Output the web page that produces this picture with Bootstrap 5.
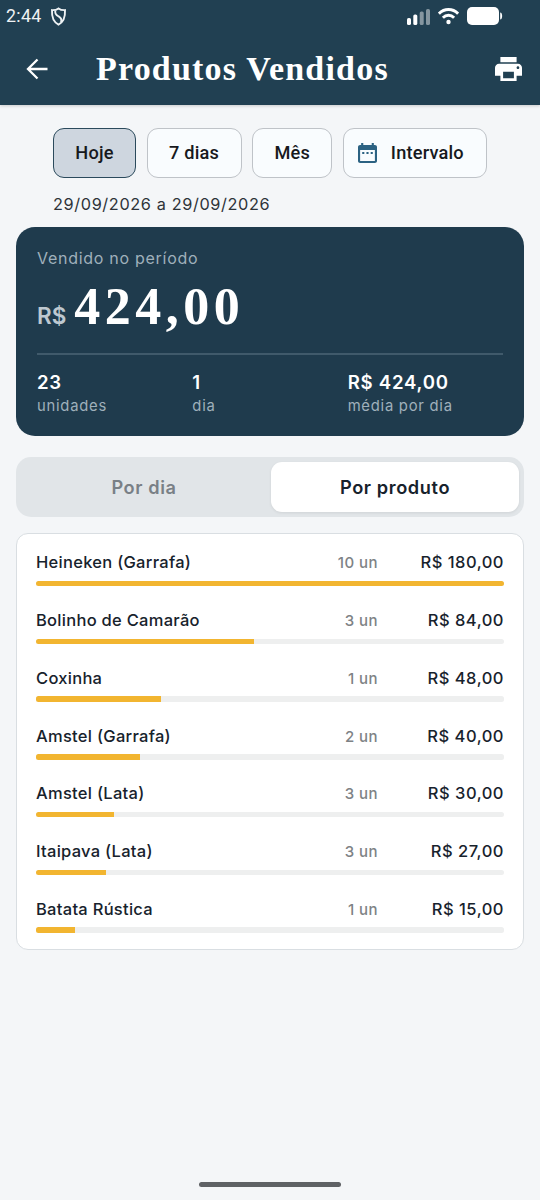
<!DOCTYPE html>
<html lang="pt-BR">
<head>
<meta charset="utf-8">
<meta name="viewport" content="width=device-width, initial-scale=1">
<title>Produtos Vendidos</title>
<link href="https://cdn.jsdelivr.net/npm/bootstrap@5.3.0/dist/css/bootstrap.min.css" rel="stylesheet">
<style>
  body { background: #f4f6f8; color: #17222c; font-family: Inter, "Open Sans", sans-serif; line-height: 1; min-height: 1200px; }
  svg { display: block; flex: none; }
  .txt { white-space: nowrap; line-height: 24px; }
  .top-area { background: #214052; height: 105px; color: #fff; box-shadow: 0 1px 3px rgba(0,0,0,.18); }
  .status-row { height: 32px; padding: 0 37px 0 6px; font-family: Roboto, sans-serif; }
  .clock { font-size: 17.8px; letter-spacing: .3px; color: #eef2f4; }
  .title-row { height: 73px; padding: 0 18px 0 25px; }
  .page-title { font: 700 34px/40px "Liberation Serif", serif; margin: 0 0 0 47px; letter-spacing: 1.2px; }
  .filters { padding: 22.6px 53px 0; }
  .chips { gap: 10.6px; }
  .chip { height: 50px; border: 1px solid #bfc3c8; border-radius: 11px; background: #f9fcfe; font: 500 18.2px/24px Roboto, sans-serif; letter-spacing: .2px; color: #17191d; padding: 0; }
  .chip.active { background: #ced6df; border-color: #2b4a5c; }
  .range { font-size: 16.3px; letter-spacing: .62px; margin-top: 14.4px; height: 24px; color: #2e3338; }
  .summary { margin: 11px 16px 0; padding: 19px 21px 0; height: 209px; border-radius: 19px; background: #1f3b4d; color: #fff; }
  .soft { color: #9fb0bb; }
  .caption-top { font-size: 16px; letter-spacing: .72px; }
  .amount-row { height: 83px; padding-top: 12px; }
  .currency { font-size: 22.5px; font-weight: 600; color: #bdc8d0; }
  .amount { font: 700 52px/50px "Liberation Serif", serif; letter-spacing: 4.5px; margin-left: 8px; }
  .rule-line { height: 2px; background: #405a6b; }
  .stat-row { padding-top: 15.5px; }
  .stat { width: 155.4px; }
  .stat-num { font-weight: 600; font-size: 18.6px; letter-spacing: .75px; }
  .stat-cap { font-size: 14.8px; letter-spacing: .75px; }
  .switcher { margin: 21px 16px 0; height: 60px; border-radius: 15px; background: #e1e5e8; padding: 5px; font-size: 18.2px; font-weight: 600; letter-spacing: .6px; }
  .switch-item { border-radius: 11px; color: #798086; }
  .switch-item.active { background: #fff; color: #17222c; box-shadow: 0 1px 3px rgba(0,0,0,.08); flex: 0 0 248px; }
  .product-list { margin: 16px 16px 0; height: 417px; border: 1px solid #d9dee2; border-radius: 12px; background: #fff; padding: 16.400px 19px 0; }
  .product { height: 57.75px; }
  .p-name, .p-total { font-size: 16.5px; font-weight: 500; }
  .p-name { letter-spacing: .28px; }
  .p-qty { font-size: 15px; font-weight: 500; color: #7e8285; width: 90px; letter-spacing: .45px; padding-top: 1px; }
  .p-total { width: 126px; letter-spacing: .5px; }
  .product-line { height: 24px; }
  .product .progress { --bs-progress-height: 5.5px; --bs-progress-bg: #eeefef; --bs-progress-bar-bg: #f2b530; --bs-progress-border-radius: 2.5px; margin-top: 6.5px; }
  .home-bar { width: 142px; height: 5px; border-radius: 3px; background: #5f6265; bottom: 13.5px; left: 199px; }
</style>
</head>
<body class="position-relative">
<header class="top-area">
  <div class="status-row d-flex align-items-center">
    <span class="clock txt">2:44</span>
    <svg style="margin-left:8px" width="17" height="19" viewBox="0 0 17 19" fill="none" stroke="#eef2f4" stroke-width="1.9"><path d="M8.500 1.400C6.500 2.900 4.400 3.200 2 3.100c-.4 7.400 1 11.700 6.500 14.500 5.500-2.800 6.900-7.100 6.500-14.500-2.400.1-4.500-.2-6.500-1.700Z"/><path d="M5.200 3.500C5 7.500 6.500 8.200 8.600 9.400c2.600 1.500 3.400 3.300 2.400 6"/></svg>
    <div class="ms-auto d-flex align-items-center">
      <svg width="24" height="17" viewBox="0 0 24 17" fill="#fff"><rect y="10" width="4" height="7" rx="1.600"/><rect x="6.300" y="6.500" width="4" height="10.500" rx="1.600"/><g opacity=".45"><rect x="12.700" y="3.500" width="4" height="13.500" rx="1.600"/><rect x="19" y="1" width="4" height="16" rx="1.600"/></g></svg>
      <svg style="margin-left:7px" width="21" height="18" viewBox="0 0 21 18" fill="none" stroke="#fff" stroke-width="2.900"><path d="M.9 6.600c5.500-5.500 13.700-5.500 19.200 0M4.900 10.700c3.200-3.200 8-3.200 11.200 0"/><circle cx="10.500" cy="15" r="2.200" fill="#fff" stroke="none"/></svg>
      <svg style="margin-left:8px" width="36" height="18" viewBox="0 0 36 18" fill="#fff"><rect width="32" height="18" rx="5"/><path d="M33.200 5.500c2.600 0 2.600 7 0 7Z"/></svg>
    </div>
  </div>
  <div class="title-row d-flex align-items-center">
    <svg width="24" height="22" viewBox="0 0 24 22" fill="none" stroke="#fff" stroke-width="2.300"><path d="M22.500 11H3M12.500 1.500 3 11l9.500 9.500"/></svg>
    <h1 class="page-title txt">Produtos Vendidos</h1>
    <svg class="ms-auto" width="27" height="24" viewBox="2 3 20 18" preserveAspectRatio="none" fill="#fff"><path d="M19 8H5c-1.660 0-3 1.340-3 3v6h4v4h12v-4h4v-6c0-1.660-1.340-3-3-3zm-3 11H8v-5h8v5zm3-7c-.55 0-1-.45-1-1s.45-1 1-1 1 .45 1 1-.45 1-1 1zm-1-9H6v4h12V3z"/></svg>
  </div>
</header>
<main>
  <section class="filters">
    <div class="chips d-flex">
      <button class="chip active" style="width:83px"><span class="txt">Hoje</span></button>
      <button class="chip" style="width:95px"><span class="txt">7 dias</span></button>
      <button class="chip" style="width:80px"><span class="txt">Mês</span></button>
      <button class="chip d-flex align-items-center" style="width:144px;padding-left:14px"><svg width="19" height="20" viewBox="3 2 18 20" preserveAspectRatio="none" fill="#2c6282"><path d="M9 11H7v2h2v-2zm4 0h-2v2h2v-2zm4 0h-2v2h2v-2zm2-7h-1V2h-2v2H8V2H6v2H5c-1.110 0-1.990.9-1.990 2L3 20c0 1.100.89 2 2 2h14c1.100 0 2-.9 2-2V6c0-1.100-.9-2-2-2zm0 16H5V9h14v11z"/></svg><span class="txt" style="margin-left:14px">Intervalo</span></button>
    </div>
    <div class="range"><span class="txt">29/09/2026 a 29/09/2026</span></div>
  </section>
  <section class="summary">
    <div class="soft caption-top"><span class="txt">Vendido no período</span></div>
    <div class="amount-row d-flex align-items-baseline"><span class="txt currency">R$</span><span class="amount">424,00</span></div>
    <div class="rule-line"></div>
    <div class="stat-row d-flex">
      <div class="stat"><div><span class="txt stat-num">23</span></div><div><span class="txt stat-cap soft">unidades</span></div></div>
      <div class="stat"><div><span class="txt stat-num">1</span></div><div><span class="txt stat-cap soft">dia</span></div></div>
      <div class="stat"><div><span class="txt stat-num">R$ 424,00</span></div><div><span class="txt stat-cap soft">média por dia</span></div></div>
    </div>
  </section>
  <nav class="switcher d-flex">
    <div class="switch-item flex-fill d-flex align-items-center justify-content-center"><span class="txt me-1">Por dia</span></div>
    <div class="switch-item active d-flex align-items-center justify-content-center"><span class="txt">Por produto</span></div>
  </nav>
  <section class="product-list">
    <div class="product"><div class="product-line d-flex"><span class="txt p-name me-auto">Heineken (Garrafa)</span><span class="txt p-qty text-end">10 un</span><span class="txt p-total text-end">R$ 180,00</span></div><div class="progress"><div class="progress-bar" style="width:100%"></div></div></div>
    <div class="product"><div class="product-line d-flex"><span class="txt p-name me-auto">Bolinho de Camarão</span><span class="txt p-qty text-end">3 un</span><span class="txt p-total text-end">R$ 84,00</span></div><div class="progress"><div class="progress-bar" style="width:46.67%"></div></div></div>
    <div class="product"><div class="product-line d-flex"><span class="txt p-name me-auto">Coxinha</span><span class="txt p-qty text-end">1 un</span><span class="txt p-total text-end">R$ 48,00</span></div><div class="progress"><div class="progress-bar" style="width:26.67%"></div></div></div>
    <div class="product"><div class="product-line d-flex"><span class="txt p-name me-auto">Amstel (Garrafa)</span><span class="txt p-qty text-end">2 un</span><span class="txt p-total text-end">R$ 40,00</span></div><div class="progress"><div class="progress-bar" style="width:22.22%"></div></div></div>
    <div class="product"><div class="product-line d-flex"><span class="txt p-name me-auto">Amstel (Lata)</span><span class="txt p-qty text-end">3 un</span><span class="txt p-total text-end">R$ 30,00</span></div><div class="progress"><div class="progress-bar" style="width:16.67%"></div></div></div>
    <div class="product"><div class="product-line d-flex"><span class="txt p-name me-auto">Itaipava (Lata)</span><span class="txt p-qty text-end">3 un</span><span class="txt p-total text-end">R$ 27,00</span></div><div class="progress"><div class="progress-bar" style="width:15%"></div></div></div>
    <div class="product"><div class="product-line d-flex"><span class="txt p-name me-auto">Batata Rústica</span><span class="txt p-qty text-end">1 un</span><span class="txt p-total text-end">R$ 15,00</span></div><div class="progress"><div class="progress-bar" style="width:8.33%"></div></div></div>
  </section>
</main>
<div class="home-bar position-absolute"></div>
<script src="https://cdn.jsdelivr.net/npm/bootstrap@5.3.0/dist/js/bootstrap.bundle.min.js"></script>
</body>
</html>
